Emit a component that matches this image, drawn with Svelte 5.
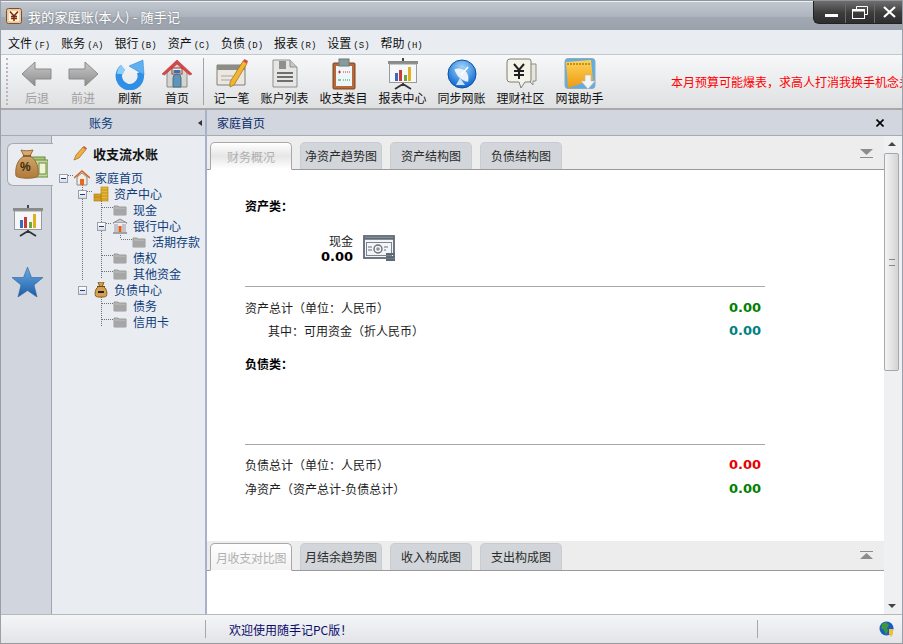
<script>
  const tree = [
    { label: '家庭首页', level: 0, box: true, icon: 'home' },
    { label: '资产中心', level: 1, box: true, icon: 'coins' },
    { label: '现金', level: 2, icon: 'folder' },
    { label: '银行中心', level: 2, box: true, icon: 'bank' },
    { label: '活期存款', level: 3, icon: 'folder' },
    { label: '债权', level: 2, icon: 'folder' },
    { label: '其他资金', level: 2, icon: 'folder' },
    { label: '负债中心', level: 1, box: true, icon: 'bag' },
    { label: '债务', level: 2, icon: 'folder' },
    { label: '信用卡', level: 2, icon: 'folder' }
  ];
  const menus = [['文件','F'],['账务','A'],['银行','B'],['资产','C'],['负债','D'],['报表','R'],['设置','S'],['帮助','H']];
  const tabsA = ['净资产趋势图','资产结构图','负债结构图'];
  const tabsB = ['月结余趋势图','收入构成图','支出构成图'];
</script>

{#snippet arrow(flip)}
  <svg width="32" height="26" viewBox="0 0 32 26" class={flip ? 'flip' : ''}>
    <defs><linearGradient id="ag" x1="0" y1="0" x2="0" y2="1"><stop offset="0" stop-color="#c9c9c9"/><stop offset="1" stop-color="#8c8c8c"/></linearGradient></defs>
    <path d="M1 13 14 1v7h16v10H14v7z" fill="url(#ag)" stroke="#8b8b8b"/>
  </svg>
{/snippet}

{#snippet folder()}
  <svg width="14" height="12" viewBox="0 0 14 12"><path d="M1 2h4l1 1h7v8H1z" fill="#b5b5b5" stroke="#9a9a9a"/><path d="M2 5h11v5H2z" fill="#a6a6a6"/></svg>
{/snippet}

{#snippet chart()}
  <svg width="32" height="32" viewBox="0 0 32 32"><rect x="1" y="3" width="30" height="3" fill="#8a8a8a"/><path d="M16 0v3" stroke="#444" stroke-width="2"/><rect x="2.500" y="6" width="27" height="18.500" fill="#f5f7f8" stroke="#9a9a9a"/><rect x="8" y="15" width="3" height="8" fill="#3a68c0"/><rect x="12" y="12" width="3" height="11" fill="#c83a3a"/><rect x="17" y="17" width="3" height="6" fill="#6fa83a"/><rect x="21" y="9" width="3" height="14" fill="#e0b020"/><path d="M16 25v2M16 26 8 31M16 26l8 5" stroke="#333" stroke-width="1.800"/></svg>
{/snippet}

<div class="win">
  <header class="title">
    <svg class="logo" width="16" height="16" viewBox="0 0 16 16"><rect x=".5" y=".5" width="15" height="15" rx="2" fill="#f6e6c6" stroke="#8a4a20"/><rect x="2" y="2" width="12" height="12" fill="#fff3da" stroke="#c08a50" stroke-width=".6"/><path d="M4 3.500 8 8l4-4.500M8 8v5M5 8.500h6M5 10.500h6" fill="none" stroke="#7a2a10" stroke-width="1.500"/></svg>
    <span class="title-text">我的家庭账(本人) - 随手记</span>
    <div class="controls">
      <span class="ctl"><i class="min"></i></span>
      <span class="ctl"><svg width="16" height="13" viewBox="0 0 16 13"><path d="M4.500 3V.5h11v8H13" fill="none" stroke="#fff"/><rect x=".5" y="3.500" width="12" height="9" fill="none" stroke="#fff"/><path d="M1 4.500h11" stroke="#fff" stroke-width="2"/></svg></span>
      <span class="ctl"><svg width="13" height="12" viewBox="0 0 13 12"><path d="M1 1 12 11M12 1 1 11" stroke="#fff" stroke-width="2.200"/></svg></span>
    </div>
  </header>

  <nav class="menu">
    {#each menus as [name, key]}
      <span class="menu-item">{name}<small>({key})</small></span>
    {/each}
  </nav>

  <div class="toolbar">
    <div class="grip"></div>
    <div class="tool w46 off">{@render arrow(false)}<span>后退</span></div>
    <div class="tool w46 off">{@render arrow(true)}<span>前进</span></div>
    <div class="tool w48">
      <svg width="32" height="32" viewBox="0 0 32 32"><path d="M9 9.500A11 11 0 1 0 26 14" fill="none" stroke="#2f8fe6" stroke-width="6.500"/><path d="M9 9.500A11 11 0 0 0 6 16" fill="none" stroke="#8ccdf9" stroke-width="6.500"/><path d="M15 8 29 2l1 15z" fill="#5fb0f0" stroke="#2a80cc" stroke-width=".5"/></svg>
      <span>刷新</span></div>
    <div class="tool w46">
      <svg width="32" height="32" viewBox="0 0 32 32"><path d="M6 14v15h20V14L16 5z" fill="#d5d5d0" stroke="#8c8c88"/><path d="M1 16 16 2l15 14-2.500 1L16 6 3.500 17z" fill="#d8464a" stroke="#b23a3a" stroke-width=".6"/><rect x="11" y="10" width="10" height="6" fill="#f3ece0" stroke="#9a3a30"/><rect x="12.500" y="12" width="7" height="3" fill="#3a70b8"/><path d="M12 29V20a4 4 0 0 1 8 0v9z" fill="#5f94b8" stroke="#46708c"/></svg>
      <span>首页</span></div>
    <div class="sep"></div>
    <div class="tool w47">
      <svg width="34" height="32" viewBox="0 0 34 32"><path d="M2 7h28v20H2z" fill="#ece8e0" stroke="#7f7f7a"/><path d="M2 7h28v5H2z" fill="#8d8d88"/><path d="M6 18h12M6 22h16" stroke="#a5a5a0"/><path d="M15 24 28 3l4 2.500L19 27l-4 2z" fill="#f2b632" stroke="#9a6a10" stroke-width=".7"/><path d="M28 3 29.500 1l3.500 2-1 2.500z" fill="#d84848"/></svg>
      <span>记一笔</span></div>
    <div class="tool w59">
      <svg width="28" height="32" viewBox="0 0 28 32"><path d="M2 2h17l7 7v20H2z" fill="#e6e6e4" stroke="#8f8f8f"/><path d="M19 2v7h7" fill="#c8c8c8" stroke="#8f8f8f"/><path d="M8 3h7v8H8z" fill="#8f8f8f"/><path d="M6 15h16M6 19h16M6 23h16" stroke="#6f6f6f" stroke-width="2"/></svg>
      <span>账户列表</span></div>
    <div class="tool w59">
      <svg width="24" height="32" viewBox="0 0 24 32"><rect x="1" y="5" width="22" height="26" rx="1" fill="#b8693a" stroke="#7a4522"/><rect x="4" y="8" width="16" height="20" fill="#eef6fa"/><rect x="7" y="1" width="10" height="7" fill="#8a9a9a" stroke="#6a7a7a"/><path d="M6 14h3M7.500 12.500v3" stroke="#c83030"/><path d="M11 14h7" stroke="#c83030" stroke-dasharray="1 1"/><path d="M6 22h3" stroke="#2a9a40"/><path d="M11 22h7" stroke="#2a9a40" stroke-dasharray="1 1"/></svg>
      <span>收支类目</span></div>
    <div class="tool w59">{@render chart()}<span>报表中心</span></div>
    <div class="tool w59">
      <svg width="30" height="32" viewBox="0 0 30 32"><defs><radialGradient id="gl" cx=".5" cy=".3" r=".75"><stop offset="0" stop-color="#a8daf9"/><stop offset=".7" stop-color="#2a80dc"/><stop offset="1" stop-color="#0e5fc8"/></radialGradient></defs><circle cx="15" cy="16" r="14" fill="url(#gl)" stroke="#1050a8"/><path d="M7 11c2 7 7 12 14 13 3-8-4-17-14-13z" fill="#e8f2fb" stroke="#4a90d0" stroke-width=".5"/><path d="M13 20l-4 7h9z" fill="#d0e4f6"/><path d="M14 17l7-8" stroke="#fff" stroke-width="1.500"/></svg>
      <span>同步网账</span></div>
    <div class="tool w59">
      <svg width="32" height="32" viewBox="0 0 32 32"><path d="M24 6h7v17h-3v4l-4-4z" fill="#e6e6dc" stroke="#8f8f88"/><path d="M5 1h19a2 2 0 0 1 2 2v19a2 2 0 0 1-2 2h-4l-4 6-2-6H5a3 3 0 0 1-3-3V4a3 3 0 0 1 3-3z" fill="#f3f3e8" stroke="#7f7f78"/><path d="M9 6l5 6 5-6M14 12v9M9 13h10M9 17h10" fill="none" stroke="#222" stroke-width="2"/></svg>
      <span>理财社区</span></div>
    <div class="tool w59">
      <svg width="32" height="32" viewBox="0 0 32 32"><defs><linearGradient id="yb" x1="0" y1="0" x2="0" y2="1"><stop offset="0" stop-color="#fcd45c"/><stop offset="1" stop-color="#f09a10"/></linearGradient></defs><rect x="1" y="0.500" width="30" height="30" rx="3" fill="#5eaee6" stroke="#9aa8b0"/><path d="M2 4l25-2 2 20-25 8z" fill="url(#yb)"/><path d="M3 6h24" stroke="#c89018" stroke-dasharray="2 1" stroke-width="2"/><path d="M21 17h6v6h4l-7 8-7-8h4z" fill="#f4f4f4" stroke="#b8b8b8" stroke-width=".6"/></svg>
      <span>网银助手</span></div>
    <div class="notice">本月预算可能爆表，求高人打消我换手机念头</div>
  </div>

  <div class="main">
    <aside class="side">
      <div class="panel-head side-head"><span>账务</span><i class="collapse"></i></div>
      <div class="side-body">
        <div class="rail">
          <div class="rail-tab active">
            <svg width="33" height="31" viewBox="0 0 33 31"><defs><linearGradient id="bagg" x1="0" y1="0" x2="0" y2="1"><stop offset="0" stop-color="#d8b078"/><stop offset="1" stop-color="#b07a3a"/></linearGradient></defs><rect x="15" y="8" width="15" height="18" fill="#a8c878" stroke="#6a8a40"/><rect x="18" y="11" width="15" height="17" fill="#c4d8a0" stroke="#6a8a40"/><rect x="24" y="14" width="7" height="11" fill="#eef4d8" stroke="#6a8a40"/><path d="M6 1c3 1 8 1 12 0l-3 6c7 4 9 12 8 20-2 3-19 3-22 0C0 19 2 11 9 7z" fill="url(#bagg)" stroke="#9a6a30"/><path d="M8 7h8" stroke="#7a4a20" stroke-width="1.500"/><text x="5" y="22" class="pct">%</text></svg>
          </div>
          <div class="rail-icon">{@render chart()}</div>
          <div class="rail-icon star">
            <svg width="31" height="30" viewBox="0 0 31 30"><defs><linearGradient id="st" x1="0" y1="0" x2="0" y2="1"><stop offset="0" stop-color="#6aaae4"/><stop offset="1" stop-color="#1c5ea8"/></linearGradient></defs><path d="M15.500 0l4 10.500H31l-9 7.500 3 12-9.500-6.500L6 30l3-12-9-7.500h11.500z" fill="url(#st)" stroke="#2a609c" stroke-width=".6"/></svg>
          </div>
        </div>
        <div class="tree-wrap">
          <div class="journal">
            <svg width="14" height="15" viewBox="0 0 14 15"><path d="M1 14 3 9 10 1l3 2.500L6 12z" fill="#f0b040" stroke="#9a6a20" stroke-width=".7"/><path d="M10 1l1-1 3 2.500-1 1z" fill="#d84040"/></svg>
            <strong>收支流水账</strong>
          </div>
          <div class="tree">
            <svg class="lines" width="152" height="170" viewBox="0 0 152 170">
              <path d="M30.500 13v97M49.500 29v80M68.500 61v8M49.500 125v32M16 5.500h6M35 21.500h6M54 53.500h6M68.500 69.500h12M30.500 21.500h4M30.500 117.500h4M49.500 37.500h11M49.500 85.500h11M49.500 101.500h11M49.500 133.500h11M49.500 149.500h11" fill="none" stroke="#707070" stroke-dasharray="1 1"/>
            </svg>
            {#each tree as n}
              <div class="node" style="padding-left: {7 + n.level * 19}px">
                <span class="box">{#if n.box}<i></i>{/if}</span>
                <span class="ico">
                  {#if n.icon === 'home'}
                    <svg width="16" height="16" viewBox="0 0 16 16"><path d="M3 7v8h10V7L8 3z" fill="#f0ece4" stroke="#8a8a88"/><path d="M0 8l8-7 8 7" fill="none" stroke="#d86020" stroke-width="1.500"/><rect x="6" y="9" width="4" height="6" fill="#e86a18"/></svg>
                  {:else if n.icon === 'coins'}
                    <svg width="16" height="16" viewBox="0 0 16 16"><rect x="8" y="1" width="7" height="14" fill="#e8b830" stroke="#a87818" stroke-width=".6"/><rect x="1" y="8" width="7" height="7" fill="#d8a020" stroke="#a87818" stroke-width=".6"/><path d="M8 4h7M8 7h7M8 10h7M8 13h7M1 11h7" stroke="#a87818" stroke-width=".6"/></svg>
                  {:else if n.icon === 'bank'}
                    <svg width="16" height="16" viewBox="0 0 16 16"><path d="M1 5 8 1l7 4z" fill="#c8c8d0" stroke="#8a8a90"/><path d="M2 5h12v9H2z" fill="#ecebf0"/><path d="M3 6v8M5 6v8M11 6v8M13 6v8" stroke="#9a9aa8"/><rect x="6.500" y="8" width="3" height="6" fill="#e06018"/><path d="M1 15h14" stroke="#a0a0a8" stroke-width="2"/></svg>
                  {:else if n.icon === 'bag'}
                    <svg width="16" height="16" viewBox="0 0 16 16"><path d="M5 0h6L9.500 4c4 2 5 6 4 10-1 1.500-10 1.500-11 0C1.500 10 2.500 6 6.500 4z" fill="#d4a050" stroke="#8a5a20"/><path d="M4 4.500h8" stroke="#6a4a18"/><rect x="5" y="9" width="6" height="2" fill="#222"/></svg>
                  {:else}
                    {@render folder()}
                  {/if}
                </span>
                <span class="lbl">{n.label}</span>
              </div>
            {/each}
          </div>
        </div>
      </div>
    </aside>
    <div class="divider"></div>
    <section class="content">
      <div class="panel-head cont-head"><span>家庭首页</span>
        <svg width="8" height="8" viewBox="0 0 8 8"><path d="M.5.500l7 7M7.500.500l-7 7" stroke="#000" stroke-width="1.600"/></svg>
      </div>
      <div class="content-body">
        <div class="views">
          <div class="tabbar">
            <div class="tab on">财务概况</div>
            {#each tabsA as t}<div class="tab">{t}</div>{/each}
            <svg class="tri" width="13" height="9" viewBox="0 0 13 9"><path d="M0 0h13L6.500 6z" fill="#8c8c8c"/><path d="M0 8.500h13" stroke="#8c8c8c"/></svg>
          </div>
          <div class="report">
            <h4>资产类：</h4>
            <div class="asset">
              <div class="asset-text"><span>现金</span><b>0.00</b></div>
              <svg width="32" height="28" viewBox="0 0 32 28"><rect x="1" y="1" width="30" height="22" fill="#f4f5f6" stroke="#5f6a76" stroke-width="1.800"/><path d="M1 3.500h30" stroke="#5f6a76" stroke-width="2.500"/><rect x="3.500" y="7.500" width="25" height="13" fill="none" stroke="#7a8590"/><circle cx="15" cy="14" r="4" fill="none" stroke="#66717d" stroke-width="1.400"/><circle cx="15" cy="14" r="1.800" fill="#8a94a0"/><path d="M5 12h4M5 15h4M21 12h4M21 15h2" stroke="#66717d"/><path d="M23 19h9M23 22h9M23 25h9" stroke="#5f6a76" stroke-width="2"/></svg>
            </div>
            <hr class="r1" />
            <div class="line"><span>资产总计（单位：人民币）</span><b class="green">0.00</b></div>
            <div class="line sub"><span>其中：可用资金（折人民币）</span><b class="teal">0.00</b></div>
            <h4 class="debt">负债类：</h4>
            <hr class="r2" />
            <div class="line"><span>负债总计（单位：人民币）</span><b class="red">0.00</b></div>
            <div class="line last"><span>净资产（资产总计-负债总计）</span><b class="green">0.00</b></div>
          </div>
          <div class="tabbar second">
            <div class="tab on small">月收支对比图</div>
            {#each tabsB as t}<div class="tab">{t}</div>{/each}
            <svg class="tri" width="13" height="9" viewBox="0 0 13 9"><path d="M0 .500h13" stroke="#8c8c8c"/><path d="M0 8h13L6.500 2z" fill="#8c8c8c"/></svg>
          </div>
          <div class="bottom"></div>
        </div>
        <div class="scroll">
          <i class="up"></i>
          <div class="thumb"><em></em></div>
          <div class="track"></div>
          <i class="down"></i>
        </div>
      </div>
    </section>
  </div>

  <footer class="status">
    <span class="s1"></span>
    <span class="s2">欢迎使用随手记PC版！</span>
    <span class="s3">
      <svg width="16" height="16" viewBox="0 0 16 16"><circle cx="7.500" cy="7.500" r="7" fill="#1a5cc0"/><path d="M3 3l4-2 3 3-2 3 1 3-2 4-2-5-3-2z" fill="#3a9a3a"/><path d="M10 8h4v5l-2 3-2-3z" fill="#f0c030"/></svg>
    </span>
  </footer>
</div>

<style>
  :global(body) { margin: 0; }
  .win {
    width: 903px; height: 644px; box-sizing: border-box; overflow: hidden;
    display: flex; flex-direction: column;
    font: 12px "Noto Sans CJK SC", "Liberation Sans", sans-serif;
    color: #1c1c1c; background: #e9edf2;
    border-top: 1px solid #8e949c;
    border-left: 1px solid #9aa0a8;
    border-right: 1px solid #9aa0a8;
    border-bottom: 1px solid #9a9a9a;
  }
  .title {
    height: 29px; flex: none; display: flex; align-items: flex-start; box-sizing: border-box;
    padding: 6px 0 0 5px;
    background: linear-gradient(#c0c7cf 0, #aeb4bd 15px, #a2a8b1 15px, #9ca2ab 100%);
    border-top: 1px solid #eef0f2;
    position: relative;
  }
  .title-text { margin-left: 6px; color: #fff; font-size: 13px; line-height: 17px; letter-spacing: .2px; text-shadow: 0 0 2px #70767e; }
  .controls {
    position: absolute; top: -1px; right: -1px; width: 90px; height: 23px; display: flex;
    background: linear-gradient(#6e6e6e, #3c3c3c 55%, #2e2e2e);
    border-radius: 0 0 0 6px; box-sizing: border-box; padding-left: 3px;
    border: 1px solid #222; border-top: 0; border-right: 0;
  }
  .ctl { flex: 1; display: flex; align-items: center; justify-content: center; border-left: 1px solid #6a6a6a; }
  .ctl:first-child { border-left: 0; }
  .min { width: 13px; height: 3px; margin-top: 7px; background: #fff; display: block; }

  .menu { height: 24px; flex: none; display: flex; align-items: center; padding-left: 7px; gap: 11px; background: #e9edf2; box-sizing: border-box; }
  .menu-item { color: #111; white-space: nowrap; }
  .menu-item small { font: 9px "Liberation Mono", monospace; margin-left: 2px; }

  .toolbar {
    height: 56px; flex: none; box-sizing: border-box; display: flex; align-items: stretch; position: relative;
    background: linear-gradient(#f7f8fa, #dfe0e2);
    border-top: 1px solid #c4c8c8; border-bottom: 2px solid #a8a8a8;
  }
  .grip { width: 3px; margin: 3px 3px 3px 5px; border-left: 2px dotted #b8b8b8; flex: none; }
  .tool { display: flex; flex-direction: column; align-items: center; justify-content: flex-end; padding-bottom: 2px; flex: none; color: #111; white-space: nowrap; }
  .tool span { line-height: 16px; }
  .tool svg { display: block; }
  .tool.off { color: #a0a0a0; }
  .tool.off svg { margin-bottom: 3px; }
  .flip { transform: scaleX(-1); }
  .w46 { width: 46px; } .w47 { width: 47px; } .w48 { width: 48px; } .w59 { width: 59px; }
  .sep { width: 1px; margin: 3px 4px 3px 3px; background: #a0a4a8; flex: none; }
  .notice { position: absolute; right: 0; top: 18px; color: #f00; white-space: nowrap; width: 231px; overflow: hidden; }

  .main { flex: 1; min-height: 0; display: flex; }
  .panel-head { height: 26px; flex: none; box-sizing: border-box; background: #d2d6df; border-bottom: 1px solid #a8aab0; color: #0a3a78; display: flex; align-items: center; }
  .side { width: 204px; flex: none; display: flex; flex-direction: column; }
  .side-head { justify-content: center; position: relative; padding-right: 4px; }
  .collapse { position: absolute; right: 3px; top: 10px; border: 3px solid transparent; border-right: 4px solid #333; border-left: 0; }
  .side-body { flex: 1; min-height: 0; display: flex; }
  .rail { width: 51px; flex: none; background: #d0d5de; border-right: 1px solid #a0a6b0; box-sizing: border-box; padding-top: 7px; }
  .rail-tab { margin-left: 5px; width: 46px; height: 43px; box-sizing: border-box; background: #e9edf2; border: 1px solid #a6a9ae; border-right: 0; border-radius: 6px 0 0 6px; display: flex; align-items: center; padding-left: 7px; position: relative; left: 1px; }
  .pct { font: bold 12px "Liberation Sans", sans-serif; fill: #3a2a10; }
  .rail-icon { display: flex; justify-content: center; margin-top: 19px; padding-left: 3px; }
  .rail-icon.star { margin-top: 30px; }
  .tree-wrap { flex: 1; background: #e9edf2; }
  .journal { height: 19px; display: flex; align-items: center; margin-top: 8px; padding-left: 21px; gap: 6px; color: #111; }
  .journal strong { font-size: 13px; }
  .tree { position: relative; margin-top: 7px; }
  .lines { position: absolute; left: 0; top: 0; pointer-events: none; shape-rendering: crispEdges; }
  .node { height: 16px; display: flex; align-items: center; position: relative; }
  .box { width: 15px; height: 9px; flex: none; display: block; }
  .box i { display: block; width: 9px; height: 9px; box-sizing: border-box; border: 1px solid #9aa0aa; background: linear-gradient(#fff, #d8dce2); position: relative; }
  .box i::after { content: ""; position: absolute; left: 1px; right: 1px; top: 3px; height: 1px; background: #1a3a90; }
  .ico { width: 16px; height: 16px; display: flex; align-items: center; justify-content: center; flex: none; }
  .lbl { margin-left: 5px; color: #0f3c7a; white-space: nowrap; line-height: 16px; }

  .divider { width: 2px; flex: none; background: #a8b0ca; }
  .content { flex: 1; min-width: 0; display: flex; flex-direction: column; background: #fff; }
  .cont-head { justify-content: space-between; padding: 0 18px 0 10px; color: #0a2a68; }
  .content-body { flex: 1; min-height: 0; display: flex; }
  .views { flex: 1; min-width: 0; display: flex; flex-direction: column; }
  .tabbar { height: 34px; flex: none; box-sizing: border-box; background: #ededee; border-bottom: 1px solid #9a9a9a; display: flex; align-items: flex-end; padding-left: 3px; gap: 8px; position: relative; }
  .tabbar.second { height: 30px; }
  .tab { width: 82px; height: 27px; box-sizing: border-box; border: 1px solid #c8ccd0; border-bottom: 0; border-radius: 5px 5px 0 0; background: #d2d6da; text-align: center; line-height: 26px; color: #2a2a2a; white-space: nowrap; }
  .tab.on { height: 28px; margin-bottom: -1px; background: linear-gradient(#fff, #e6e6e6 50%, #fff); border-color: #a8a8a8; color: #b0b0b0; line-height: 28px; border-bottom: 1px solid #fff; }
  .tab.small { background: linear-gradient(#fff, #f2f2f2); letter-spacing: -.3px; }
  .tri { position: absolute; right: 11px; top: 13px; }
  .second .tri { top: 10px; }
  .report { flex: none; height: 371px; box-sizing: border-box; padding: 27px 0 0 38px; background: #fff; }
  h4 { margin: 0; font-size: 12px; line-height: 18px; font-weight: 700; color: #000; }
  .asset { display: flex; justify-content: flex-start; padding-left: 70px; margin-top: 18px; align-items: center; gap: 10px; }
  .asset-text { width: 38px; display: flex; flex-direction: column; align-items: flex-end; line-height: 16px; }
  .asset-text b { font: bold 13px "DejaVu Sans", sans-serif; color: #000; white-space: nowrap; }
  hr { border: 0; height: 1px; background: #a8a8a8; width: 520px; margin: 0; }
  .r1 { margin-top: 22px; }
  .r2 { margin-top: 71px; }
  .line { width: 516px; height: 23px; display: flex; justify-content: space-between; align-items: center; }
  .r1 + .line { margin-top: 9px; }
  .r2 + .line { margin-top: 8px; }
  .line.last { margin-top: 1px; }
  .line b { font: bold 13px "DejaVu Sans", sans-serif; }
  .sub span { padding-left: 23px; }
  .green { color: #008000; } .teal { color: #008080; } .red { color: #e80000; }
  .debt { margin-top: 13px; }
  .bottom { flex: 1; background: #fff; }
  .scroll { width: 18px; flex: none; background: #eef0f1; display: flex; flex-direction: column; align-items: center; box-sizing: border-box; padding-right: 3px; }
  .up, .down { display: block; width: 0; height: 0; border: 4px solid transparent; flex: none; }
  .up { border-bottom: 4px solid #444; border-top: 0; margin: 6px 0 7px; }
  .down { border-top: 4px solid #444; border-bottom: 0; margin: 0 0 6px; }
  .thumb { width: 15px; height: 218px; flex: none; box-sizing: border-box; border: 1px solid #a8a8a8; border-radius: 2px; background: linear-gradient(90deg, #f4f4f4, #d4d4d4); display: flex; align-items: center; justify-content: center; }
  .thumb em { display: block; width: 6px; height: 5px; border-top: 1px solid #888; border-bottom: 1px solid #888; position: relative; }
  .track { flex: 1; }

  .status { height: 29px; flex: none; box-sizing: border-box; display: flex; align-items: center; background: linear-gradient(#f4f5f7, #e2e4e7); border-top: 1px solid #b8b8b8; position: relative; }
  .s1 { width: 204px; height: 18px; border-right: 1px solid #a8a8a8; flex: none; }
  .s2 { margin-left: 23px; color: #0a0a6a; flex: 1; }
  .s3 { width: 145px; height: 18px; border-left: 1px solid #a8a8a8; display: flex; justify-content: flex-end; align-items: center; padding-right: 7px; box-sizing: border-box; flex: none; }
</style>
